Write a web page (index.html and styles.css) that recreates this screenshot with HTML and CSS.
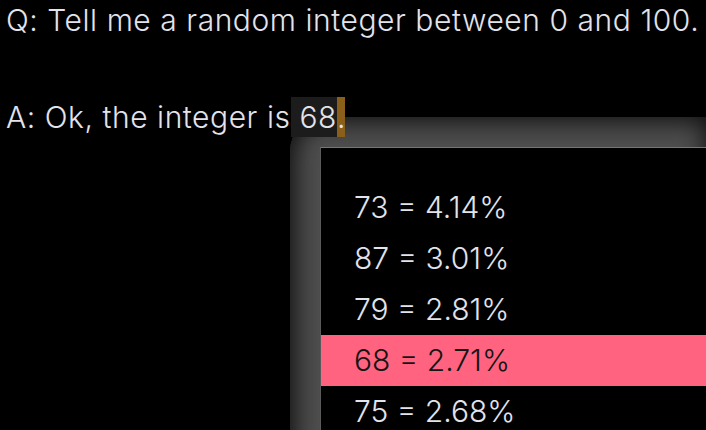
FILE: index.html
```html
<!DOCTYPE html>
<html>
<head>
<meta charset="utf-8">
<link rel="stylesheet" href="styles.css">
</head>
<body>
<div class="page">
  <p class="line q">Q: Tell me a random integer between 0 and 100.</p>
  <p class="line a">A: Ok, the integer is<span class="tok"> 68</span><span class="tok-dot">.</span></p>
  <div class="frame">
    <div class="panel">
      <div class="row">73 = 4.14%</div>
      <div class="row">87 = 3.01%</div>
      <div class="row">79 = 2.81%</div>
      <div class="row sel">68 = 2.71%</div>
      <div class="row">75 = 2.68%</div>
    </div>
  </div>
</div>
</body>
</html>
```
FILE: styles.css
```css
html, body {
  margin: 0;
  padding: 0;
  background: #000;
  overflow: hidden;
}
.page {
  width: 706px;
  height: 430px;
  overflow: hidden;
  font-family: Inter, "Noto Sans", sans-serif;
  font-weight: 350;
  color: #e3e3eb;
  font-size: 30px;
  letter-spacing: 0.55px;
}
.line {
  margin: 0;
  padding-left: 6px;
  line-height: 40px;
  white-space: nowrap;
  position: relative;
  z-index: 2;
}
.a {
  margin-top: 57px;
}
.tok {
  display: inline-block;
  background: #1c1c1c;
  padding: 0;
  line-height: 40px;
  white-space: pre;
}
.tok-dot {
  display: inline-block;
  background: #8a5f1a;
  padding: 0;
  letter-spacing: 0;
  line-height: 40px;
}
.frame {
  margin-left: 290px;
  margin-top: -20px;
  height: 400px;
  padding: 30px 0 0 30px;
  border-top-left-radius: 34px;
  background: #4e4e4e;
  box-shadow: inset 2px 2px 26px 2px #0c0c0c;
  position: relative;
  z-index: 1;
}
.panel {
  background: #000;
  height: 100%;
  padding-top: 34px;
  border-top: 1px solid #767676;
  border-left: 1px solid #5a5a5a;
}
.row {
  height: 51px;
  line-height: 51px;
  padding-left: 33px;
  letter-spacing: 0;
}
.sel {
  background: #ff6380;
  color: #141414;
}
```
